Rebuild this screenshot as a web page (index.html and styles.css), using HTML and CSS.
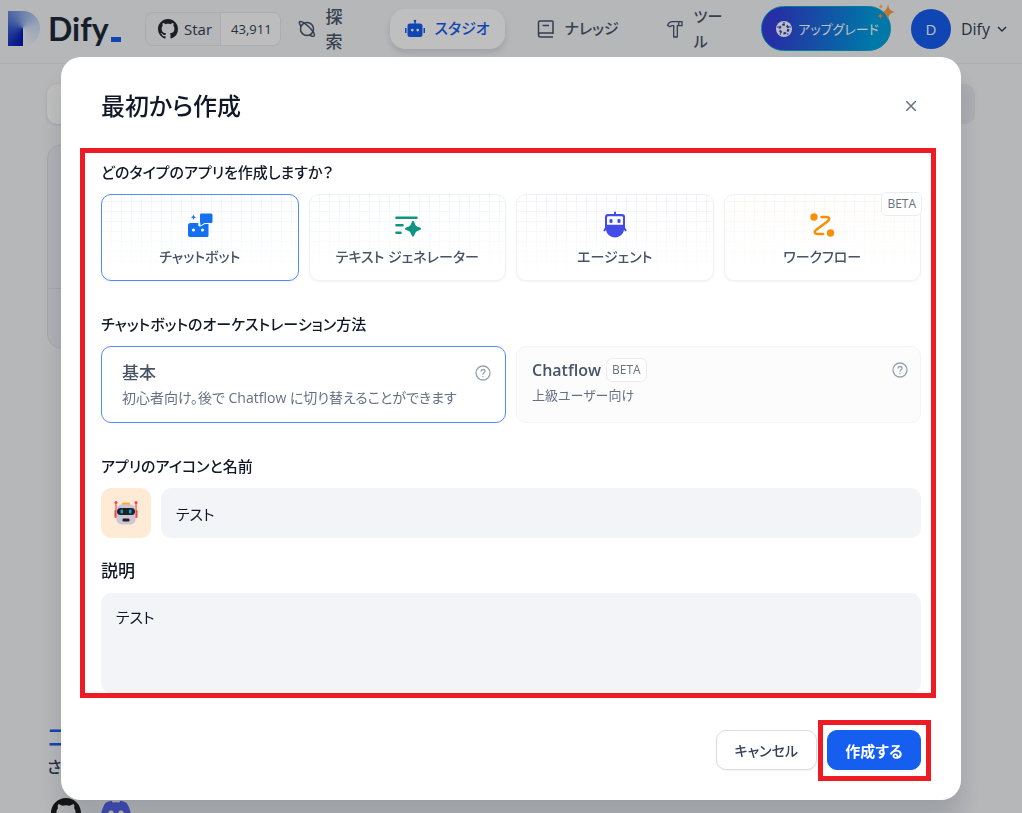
FILE: index.html
```html
<!DOCTYPE html>
<html lang="ja">
<head>
<meta charset="utf-8">
<meta name="viewport" content="width=device-width, initial-scale=1">
<title>Dify</title>
<link rel="stylesheet" href="styles.css">
</head>
<body>
<header class="topbar">
  <a class="brand" href="#">
    <span class="brand-mark"></span>
    <span class="brand-name">Dify</span><span class="brand-dash"></span>
  </a>
  <a class="star" href="#">
    <span class="star-label">
      <svg class="i20" viewBox="0 0 16 16" aria-hidden="true"><path fill="#24292f" d="M8 0C3.580 0 0 3.580 0 8c0 3.540 2.290 6.530 5.470 7.590.4.070.550-.170.550-.380 0-.190-.010-.820-.010-1.490-2.010.370-2.530-.490-2.690-.940-.090-.230-.480-.940-.820-1.130-.280-.150-.680-.520-.010-.530.630-.010 1.080.580 1.230.820.720 1.210 1.870.870 2.330.660.070-.520.280-.870.510-1.070-1.780-.2-3.640-.890-3.640-3.950 0-.870.310-1.590.820-2.150-.080-.2-.360-1.020.080-2.120 0 0 .670-.210 2.200.820.640-.180 1.320-.270 2-.270s1.360.090 2 .270c1.530-1.040 2.200-.820 2.200-.820.440 1.100.160 1.920.080 2.120.510.560.820 1.270.820 2.150 0 3.070-1.870 3.750-3.650 3.950.290.250.540.730.540 1.480 0 1.070-.010 1.930-.010 2.200 0 .210.150.460.550.380A8.010 8.010 0 0 0 16 8c0-4.420-3.580-8-8-8z"/></svg>
      Star</span>
    <span class="star-count">43,911</span>
  </a>
  <a class="nav-item explore" href="#">
    <svg class="i18" viewBox="0 0 18 18" fill="none" stroke="currentColor" stroke-width="1.500" aria-hidden="true"><circle cx="9" cy="9" r="6.500"/><path d="M3 6.500C1 3.500 1 1.700 2.200 1.500 4.500 1 8 4 11.300 7.300S17.500 14.500 16 16c-.8.800-2.500.2-4.500-1"/></svg>
    <span class="nav-narrow">探索</span>
  </a>
  <nav class="nav">
    <a class="nav-item active" href="#">
      <svg class="i20" viewBox="0 0 20 20" fill="currentColor" aria-hidden="true"><circle cx="10" cy="2" r="1.300"/><path d="M9.300 2h1.400v3H9.300zM0 9h1.500v5H0zM18.500 9H20v5h-1.500z"/><path fill-rule="evenodd" d="M5 4.500h10a2.500 2.500 0 0 1 2.500 2.500v8.500a2.500 2.500 0 0 1-2.500 2.500H5a2.500 2.500 0 0 1-2.500-2.500V7A2.500 2.500 0 0 1 5 4.500zM7.300 9.700a1.300 1.300 0 1 0 0 2.700 1.300 1.300 0 0 0 0-2.700zm5.400 0a1.300 1.300 0 1 0 0 2.700 1.300 1.300 0 0 0 0-2.700z"/></svg>
      <span>スタジオ</span>
    </a>
    <a class="nav-item" href="#">
      <svg class="i18" viewBox="0 0 18 18" fill="none" stroke="currentColor" stroke-width="1.500" aria-hidden="true"><path d="M16 17H3.500a2 2 0 0 1-2-2V2.500A1.500 1.500 0 0 1 3 1h12a1 1 0 0 1 1 1v11H3.500a2 2 0 0 0-2 2M5.500 5.500H12M16 13v1"/></svg>
      <span>ナレッジ</span>
    </a>
    <a class="nav-item" href="#">
      <svg class="i18" viewBox="0 0 18 18" fill="none" stroke="currentColor" stroke-width="1.300" stroke-linejoin="round" aria-hidden="true"><path d="M1.500 5.500C2.500 3 4 1.700 6.500 1.700H16v4h-4.700V17H7.700V5.700H5.500L4 6.700zM12.700 1.700v4"/></svg>
      <span class="nav-narrow">ツール</span>
    </a>
  </nav>
  <div class="account">
    <button class="upgrade" type="button">
      <svg class="i16" viewBox="0 0 16 16" aria-hidden="true"><circle cx="8" cy="8" r="8" fill="#fff"/><circle cx="8" cy="8" r="4.300" fill="none" stroke="#2a45d8" stroke-width="2.200" stroke-dasharray="2.700 1.800"/><path fill="#fff" d="M8 4.300l1.100 2.300 2.500.4-1.800 1.800.4 2.500L8 10.100l-2.200 1.200.4-2.500L4.400 7l2.500-.4z"/><g fill="#2a45d8"><circle cx="8" cy="1.700" r=".8"/><circle cx="2" cy="6" r=".8"/><circle cx="14" cy="6" r=".8"/><circle cx="4.300" cy="13" r=".8"/><circle cx="11.700" cy="13" r=".8"/></g></svg>
      アップグレード
      <svg class="sparkle" viewBox="0 0 18 18" aria-hidden="true"><path fill="#fa9f45" d="M11 1c.8 5 2 6.500 7 8-5 1.300-6.200 2.800-7 8-.8-5.200-2-6.700-6-8 4-1.500 5.200-3 6-8z"/><path fill="#fdba62" d="M4 .5c.3 2 .8 2.500 2.500 3C4.800 4 4.300 4.500 4 6.500 3.700 4.500 3.200 4 1.500 3.500 3.200 3 3.700 2.500 4 .5z"/><path fill="#f58c4b" d="M3.500 9.500c.4 2.200 1 2.900 3 3.500-2 .6-2.600 1.200-3 3.500-.4-2.300-1-2.900-3-3.500 2-.6 2.600-1.300 3-3.500z"/></svg>
    </button>
    <button class="user" type="button">
      <span class="avatar">D</span>
      <span>Dify</span>
      <svg class="i10" viewBox="0 0 10 10" fill="none" stroke="currentColor" stroke-width="1.500" aria-hidden="true"><path d="M1 3l4 4 4-4"/></svg>
    </button>
  </div>
</header>
<main class="page">
  <div class="filters"><span class="tab"></span><span class="search"></span></div>
  <div class="new-app"><div class="new-app-top"></div></div>
  <section class="community">
    <h2 class="community-title">コミュニティに参加</h2>
    <p class="community-text">さまざまなチャネル</p>
    <div class="community-links">
      <svg class="i30" viewBox="0 0 16 16" aria-hidden="true"><path fill="#1b1b1d" d="M8 0C3.580 0 0 3.580 0 8c0 3.540 2.290 6.530 5.470 7.590.4.070.550-.170.550-.380 0-.190-.010-.820-.010-1.490-2.010.370-2.530-.490-2.690-.940-.090-.230-.480-.940-.820-1.130-.280-.150-.680-.520-.010-.530.630-.010 1.080.580 1.230.820.720 1.210 1.870.870 2.330.660.070-.520.280-.870.510-1.070-1.780-.2-3.640-.890-3.640-3.950 0-.870.310-1.590.820-2.150-.080-.2-.360-1.020.080-2.120 0 0 .670-.210 2.200.820.640-.180 1.320-.270 2-.270s1.360.090 2 .270c1.530-1.040 2.200-.820 2.200-.820.440 1.100.160 1.920.080 2.120.510.560.820 1.270.820 2.150 0 3.070-1.870 3.750-3.650 3.950.290.250.540.730.540 1.480 0 1.070-.010 1.930-.010 2.200 0 .210.150.460.550.380A8.010 8.010 0 0 0 16 8c0-4.420-3.580-8-8-8z"/></svg>
      <svg class="i30" viewBox="1.500 2 21 21" aria-hidden="true"><path fill="#5865f2" fill-rule="evenodd" d="M19.300 5.340C17.930 4.710 16.480 4.250 14.960 4c-.19.330-.4.770-.55 1.120a16 16 0 0 0-4.810 0C9.450 4.770 9.230 4.330 9.050 4c-1.530.250-2.980.710-4.340 1.340C1.960 9.390 1.220 13.350 1.590 17.250c1.830 1.330 3.590 2.140 5.320 2.670.42-.57.8-1.190 1.130-1.840a11 11 0 0 1-1.790-.86l.43-.34c3.460 1.580 7.210 1.580 10.630 0l.43.340c-.57.340-1.170.630-1.790.86.330.650.710 1.270 1.130 1.840 1.730-.53 3.500-1.340 5.320-2.670.46-4.520-.72-8.440-3.100-11.910zM8.520 14.850c-1.040 0-1.890-.95-1.890-2.110s.83-2.100 1.890-2.100c1.050 0 1.910.94 1.890 2.100 0 1.160-.84 2.110-1.890 2.110zm6.970 0c-1.040 0-1.890-.95-1.890-2.110s.83-2.100 1.890-2.100c1.050 0 1.910.94 1.890 2.100 0 1.160-.83 2.110-1.890 2.110z"/></svg>
    </div>
  </section>
</main>

<div class="backdrop">
  <form class="modal" role="dialog" aria-labelledby="dialog-title">
    <div class="modal-head">
      <h1 class="modal-title" id="dialog-title">最初から作成</h1>
      <button class="close" type="button" aria-label="閉じる"><svg class="i10" viewBox="0 0 10 10" fill="none" stroke="currentColor" stroke-width="1.500" aria-hidden="true"><path d="M0 0l10 10M10 0L0 10"/></svg></button>
    </div>
    <div class="fields">
      <section class="field">
        <h2 class="label">どのタイプのアプリを作成しますか？</h2>
        <div class="types">
          <button class="type chat selected" type="button" aria-pressed="true">
            <svg class="i28" viewBox="0 0 28 28" fill="#1570ef" aria-hidden="true"><path d="M15 2.500h10A1.500 1.500 0 0 1 26.500 4v6.500A1.500 1.500 0 0 1 25 12h-6.500l-4 2.500-.500-4V4a1.500 1.500 0 0 1 1-1.500zM7.500 3.500l.8 1.900 1.900.8-1.900.8-.8 1.900-.8-1.900-1.900-.8 1.900-.8z"/><path fill-rule="evenodd" d="M4.500 12h7.700v1.300c0 2 1 2.500 2.500 2L19 13h3.500v11.500A1.500 1.500 0 0 1 21 26H4a2 2 0 0 1-2-2v-9.500A2.500 2.500 0 0 1 4.500 12zM7.500 17.500a1.500 1.500 0 1 0 0 3 1.500 1.500 0 0 0 0-3zm9 0a1.500 1.500 0 1 0 0 3 1.500 1.500 0 0 0 0-3z"/></svg>
            <span>チャットボット</span>
          </button>
          <button class="type text" type="button">
            <svg class="i28" viewBox="0 0 28 28" aria-hidden="true"><g stroke="#0e9384" stroke-width="2.600" stroke-linecap="round"><path d="M3.500 6.700h20M3.500 14.200h6M3.500 21.700h4"/></g><path fill="#0e9384" d="M20 10c.8 0 1 .4 1.300 1.200 1.400 3.600 1.700 4 5.500 5.300.9.300 1.200.6 1.200 1.200s-.3.900-1.200 1.200c-3.800 1.400-4.100 1.700-5.500 5.400-.3.800-.5 1.200-1.300 1.200s-1-.4-1.300-1.200c-1.400-3.700-1.700-4-5.500-5.400-.9-.3-1.200-.6-1.200-1.200s.3-.9 1.200-1.200c3.800-1.300 4.100-1.700 5.500-5.300.3-.8.500-1.200 1.300-1.200z"/></svg>
            <span>テキスト ジェネレーター</span>
          </button>
          <button class="type agent" type="button">
            <svg class="i28" viewBox="0 0 28 28" fill="#444ce7" aria-hidden="true"><path fill-rule="evenodd" d="M13 3V1.500a1 1 0 0 1 2 0V3h6a3 3 0 0 1 3 3v10.500l1.500 2.700c.4.900-.7 1.600-1.500.9l-1-1C22 24 18 26.500 14 26.500S6 24 5 19.100l-1 1c-.8.700-1.900 0-1.500-.9L4 16.500V6a3 3 0 0 1 3-3zM7.300 5.200A1.300 1.300 0 0 0 6 6.500v7.300h16V6.500a1.300 1.300 0 0 0-1.300-1.300z"/><rect x="8.500" y="8" width="3" height="4" rx="1"/><rect x="16.500" y="8" width="3" height="4" rx="1"/></svg>
            <span>エージェント</span>
          </button>
          <button class="type flow" type="button">
            <svg class="i28" viewBox="0 0 28 28" aria-hidden="true"><circle cx="6" cy="6" r="3.700" fill="#f79009"/><circle cx="22.500" cy="22" r="3.700" fill="#f79009"/><path fill="none" stroke="#f79009" stroke-width="2.600" stroke-linecap="round" stroke-linejoin="round" d="M13.500 6h5c3 0 3.500 2.500 1.500 4L8 19c-2 1.500-1.500 4 1 4h6"/></svg>
            <span>ワークフロー</span>
            <span class="badge corner">BETA</span>
          </button>
        </div>
      </section>
      <section class="field">
        <h2 class="label">チャットボットのオーケストレーション方法</h2>
        <div class="modes">
          <button class="mode selected" type="button" aria-pressed="true">
            <span class="mode-title">基本</span>
            <svg class="i16" viewBox="0 0 16 16" fill="none" stroke="#98a2b3" stroke-width="1.300" stroke-linecap="round" aria-hidden="true"><circle cx="8" cy="8" r="7"/><path d="M6 6.200C6.200 4.900 7 4.500 8 4.500c1.200 0 2 .7 2 1.700C10 7.700 8 7.700 8 9.200M8 11.500v.1"/></svg>
            <span class="mode-text">初心者向け。後で Chatflow に切り替えることができます</span>
          </button>
          <button class="mode muted" type="button">
            <span class="mode-title latin">Chatflow <span class="badge">BETA</span></span>
            <svg class="i16" viewBox="0 0 16 16" fill="none" stroke="#98a2b3" stroke-width="1.300" stroke-linecap="round" aria-hidden="true"><circle cx="8" cy="8" r="7"/><path d="M6 6.200C6.200 4.900 7 4.500 8 4.500c1.200 0 2 .7 2 1.700C10 7.700 8 7.700 8 9.200M8 11.500v.1"/></svg>
            <span class="mode-text">上級ユーザー向け</span>
          </button>
        </div>
      </section>
      <div class="field">
        <label class="label" for="app-name">アプリのアイコンと名前</label>
        <div class="name-row">
          <button class="app-icon" type="button" aria-label="アイコン">
            <svg class="i26" viewBox="0 0 26 26" aria-hidden="true"><path stroke="#f0474f" stroke-width="1.200" d="M3 3v9M23 3v9"/><circle cx="3" cy="2.500" r="1.500" fill="#f0474f"/><circle cx="23" cy="2.500" r="1.500" fill="#f0474f"/><rect x="1.500" y="10" width="3" height="8" rx="1.300" fill="#f0474f"/><rect x="21.500" y="10" width="3" height="8" rx="1.300" fill="#f0474f"/><rect x="9" y="2.500" width="8" height="4" rx="1" fill="#ffae2e"/><rect x="3.500" y="4.500" width="19" height="20" rx="5" fill="#cdc4d6"/><rect x="4" y="8" width="18" height="7" rx="3.500" fill="#212121"/><rect x="7.500" y="9.500" width="2.500" height="4" rx="1" fill="#00a6ed"/><rect x="16" y="9.500" width="2.500" height="4" rx="1" fill="#00a6ed"/><rect x="9.500" y="18.500" width="7" height="3" rx="1.300" fill="#212121"/></svg>
          </button>
          <input class="input" id="app-name" type="text" value="テスト">
        </div>
      </div>
      <div class="field close-up">
        <label class="label short" for="app-desc">説明</label>
        <textarea class="input area" id="app-desc">テスト</textarea>
      </div>
    </div>
    <div class="actions">
      <button class="btn" type="button">キャンセル</button>
      <span class="framed"><button class="btn primary" type="submit">作成する</button></span>
    </div>
  </form>
</div>
</body>
</html>
```
FILE: styles.css
```css
* { box-sizing: border-box; }
body {
  margin: 0;
  height: 100vh;
  overflow: hidden;
  background: #f2f4f7;
  color: #101828;
  font-family: "Open Sans", "Noto Sans CJK JP", sans-serif;
  font-feature-settings: "palt";
  font-size: 16px;
}
h1, h2, p { margin: 0; font-weight: 500; }
a { color: inherit; text-decoration: none; }
button, input, textarea { font: inherit; color: inherit; border: 0; font-feature-settings: inherit; }
button { padding: 0; background: none; }
svg { display: block; flex: none; }
.i10 { width: 10px; height: 10px; }
.i16 { width: 16px; height: 16px; }
.i18 { width: 18px; height: 18px; }
.i20 { width: 20px; height: 20px; }
.i26 { width: 26px; height: 26px; }
.i28 { width: 28px; height: 28px; }
.i30 { width: 30px; height: 30px; }

.topbar {
  display: flex;
  align-items: center;
  height: 64px;
  padding: 0 15px 6px 8px;
  border-bottom: 1px solid #e4e7ec;
}
.brand { display: flex; align-items: center; width: 113px; flex: none; }
.brand-mark {
  width: 32px;
  height: 35px;
  border-radius: 0 17px 17px 0;
  background: conic-gradient(from 180deg at 15px 17px, #0014b4, #3a5fd0 90deg, #8aa7e4 170deg, #cfdcf4 260deg, #f2f5fa);
}
.brand-name {
  margin-left: 8px;
  font: 700 32px/36px Lato, sans-serif;
  color: #1d2939;
}
.brand-dash { align-self: flex-end; width: 10px; height: 5px; margin: 0 0 5px 2px; background: #155eef; }
.star {
  display: flex;
  height: 34px;
  margin-left: 24px;
  flex: none;
  border: 1px solid #e4e7ec;
  border-radius: 8px;
  overflow: hidden;
  font-size: 15px;
  line-height: 32px;
  color: #344054;
}
.star-label { display: flex; align-items: center; gap: 6px; padding: 0 8px 0 12px; border-right: 1px solid #e4e7ec; }
.star-count { padding: 0 8px 0 10px; background: #fcfcfd; font-size: 13px; font-weight: 500; }
.nav { display: flex; gap: 17px; margin-left: 32px; flex: none; }
.nav-item {
  display: flex;
  align-items: center;
  gap: 10px;
  height: 40px;
  padding: 0 15px;
  color: #475467;
  font-weight: 500;
  font-size: 15px;
  line-height: 25px;
}
.nav-narrow { width: 30px; word-break: break-all; }
.explore { padding: 0 0 0 17px; font-size: 17px; }
.explore .nav-narrow { width: 18px; margin-right: 14px; }
.active { background: #fff; border-radius: 15px; color: #155eef; box-shadow: 0 4px 6px rgba(16, 24, 40, .12); }
.account { display: flex; align-items: center; gap: 20px; margin-left: auto; }
.upgrade {
  position: relative;
  display: flex;
  align-items: center;
  gap: 6px;
  height: 45px;
  padding: 0 11px 0 14px;
  border: 1px solid #00a8d6;
  border-radius: 23px;
  background: linear-gradient(100deg, #333fdc 12%, #00a0e0 85%);
  color: #fff;
  white-space: nowrap;
  font-size: 13px;
}
.sparkle { position: absolute; top: -4px; right: -5px; width: 18px; height: 18px; }
.user { display: flex; align-items: center; gap: 10px; color: #344054; font-size: 16px; }
.user .i10 { margin-left: -3px; }
.avatar { width: 40px; height: 40px; border-radius: 50%; background: #155eef; color: #fff; font-size: 15px; line-height: 40px; text-align: center; }

.page { padding: 20px 47px 0; }
.filters { display: flex; justify-content: space-between; }
.tab { width: 120px; height: 40px; border-radius: 10px; background: #fff; box-shadow: 0 1px 3px rgba(16, 24, 40, .12); }
.search { width: 240px; height: 40px; border-radius: 10px; background: #e6e8ed; }
.new-app { height: 205px; margin-top: 20px; width: 400px; border: 1px solid #dcdfe5; border-radius: 15px; background: #eaecf1; }
.new-app-top { height: 144px; border-bottom: 1px solid #dcdfe5; }
.community { margin-top: 374px; }
.community-title { color: #155eef; font-size: 24px; line-height: 28px; }
.community-text { margin-top: 5px; color: #344054; font-size: 16px; line-height: 22px; }
.community-links { display: flex; gap: 20px; margin: 20px 0 0 4px; }

.backdrop {
  position: fixed;
  inset: 0;
  overflow: auto;
  padding: 57px 20px 0;
  background: rgba(0, 0, 0, .25);
}
.modal {
  max-width: 900px;
  margin: 0 auto;
  padding: 31px 40px 30px;
  border-radius: 20px;
  background: #fff;
  box-shadow: 0 20px 24px rgba(16, 24, 40, .14);
}
.modal-head { display: flex; justify-content: space-between; align-items: center; margin-bottom: 36px; }
.modal-title { font-size: 24px; line-height: 36px; }
.close { padding: 5px; color: #667085; }
.fields { position: relative; display: flex; flex-direction: column; gap: 31px; }
.fields::after {
  content: "";
  position: absolute;
  inset: -12px -15px -5px -21px;
  border: 5px solid #ed1c24;
  pointer-events: none;
}
.field { display: flex; flex-direction: column; gap: 10px; }
.close-up { margin-top: -10px; }
.label { font-size: 15px; line-height: 24px; font-weight: 500; }
.short { font-size: 17px; }
.types { display: grid; grid-template-columns: repeat(4, 1fr); gap: 10px; }
.type {
  position: relative;
  display: flex;
  flex-direction: column;
  align-items: center;
  gap: 6px;
  height: 87px;
  padding-top: 16px;
  border: 1px solid #f0f1f4;
  border-radius: 10px;
  background:
    linear-gradient(transparent, #fff 95%),
    linear-gradient(90deg, var(--tint) 1px, transparent 1px) 9px 0 / 10px 10px,
    linear-gradient(var(--tint) 1px, transparent 1px) 0 6px / 10px 10px;
  box-shadow: 0 1px 2px rgba(16, 24, 40, .05);
  color: #475467;
  font-size: 14px;
  line-height: 24px;
  font-weight: 500;
}
.chat { --tint: #edf4ff; }
.text { --tint: #f1f5fb; }
.agent { --tint: #f0f1fd; }
.flow { --tint: #fdf5ec; }
.type.selected, .mode.selected { border-color: #528bff; }
.badge {
  display: inline-block;
  padding: 0 5px;
  border: 1px solid #eaecf0;
  border-radius: 6px;
  background: #fff;
  color: #667085;
  font-size: 12px;
  line-height: 22px;
  font-weight: 500;
}
.corner { position: absolute; top: -3px; right: -2px; }
.modes { display: grid; grid-template-columns: repeat(2, 1fr); gap: 10px; }
.mode {
  display: grid;
  grid-template-columns: 1fr auto;
  align-items: center;
  align-content: start;
  height: 77px;
  padding: 14px 14px 0 20px;
  border: 1px solid #528bff;
  border-radius: 10px;
  text-align: left;
}
.mode-title { display: flex; align-items: center; gap: 5px; color: #475467; font-size: 17px; line-height: 24px; font-weight: 500; }
.latin { font-size: 16px; font-weight: 600; }
.mode-text { grid-column: 1 / -1; margin-top: 2px; color: #667085; font-size: 14px; line-height: 22px; }
.muted .mode-text { font-size: 13px; }
.mode.muted { padding: 11px 12px 0 15px; border-color: #f2f4f7; background: #fcfcfd; }
.name-row { display: flex; gap: 10px; }
.app-icon { display: grid; place-items: center; width: 50px; height: 50px; flex: none; border-radius: 10px; background: #ffead5; }
.input { flex: 1; min-width: 0; height: 50px; padding: 0 15px; border-radius: 10px; background: #f2f4f7; outline: 0; font-size: 15px; }
.area { flex: none; width: 100%; height: 100px; padding: 12px 15px; resize: none; line-height: 24px; }
.actions { display: flex; justify-content: flex-end; gap: 10px; margin-top: 37px; }
.btn {
  height: 40px;
  min-width: 94px;
  padding: 0 18px;
  border-radius: 10px;
  border: 1px solid #d9dce2;
  background: #fff;
  color: #344054;
  font-size: 14px;
  font-weight: 500;
  box-shadow: 0 1px 2px rgba(16, 24, 40, .05);
}
.primary { padding: 0 16px; border-color: #155eef; background: #155eef; color: #fff; font-size: 15px; font-weight: 700; }
.framed { position: relative; }
.framed::after { content: ""; position: absolute; inset: -10px -10px -11px -9px; border: 5px solid #ed1c24; pointer-events: none; }
```
